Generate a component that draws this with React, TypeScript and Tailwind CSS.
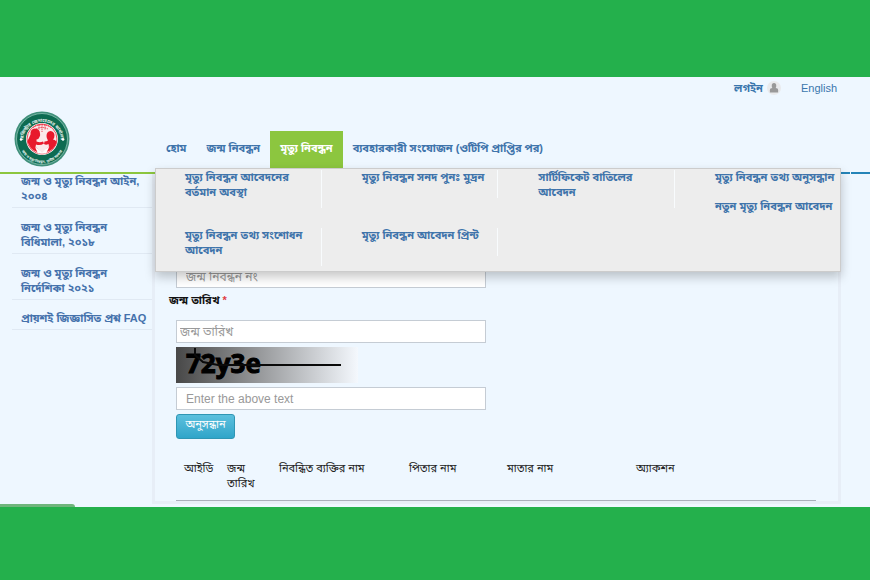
import type { ReactNode } from "react";

const sideLinks = [
  "জন্ম ও মৃত্যু নিবন্ধন আইন, ২০০৪",
  "জন্ম ও মৃত্যু নিবন্ধন বিধিমালা, ২০১৮",
  "জন্ম ও মৃত্যু নিবন্ধন নির্দেশিকা ২০২১",
  "প্রায়শই জিজ্ঞাসিত প্রশ্ন FAQ",
];

// each cell of the mega menu can hold more than one link
const menuCells = [
  ["মৃত্যু নিবন্ধন আবেদনের বর্তমান অবস্থা"],
  ["মৃত্যু নিবন্ধন সনদ পুনঃ মুদ্রন"],
  ["সার্টিফিকেট বাতিলের আবেদন"],
  ["মৃত্যু নিবন্ধন তথ্য অনুসন্ধান", "নতুন মৃত্যু নিবন্ধন আবেদন"],
  ["মৃত্যু নিবন্ধন তথ্য সংশোধন আবেদন"],
  ["মৃত্যু নিবন্ধন আবেদন প্রিন্ট"],
];

function Logo() {
  return (
    <svg viewBox="0 0 112 112" className="h-14 w-14 shrink-0" aria-hidden="true">
      <defs>
        <path id="arcTop" d="M18 60 A38 38 0 1 1 94 60" />
        <path id="arcBottom" d="M10 58 A46 46 0 0 0 102 58" />
      </defs>
      <circle cx="56" cy="56" r="55" fill="#3f8f7a" />
      <circle cx="56" cy="56" r="51" fill="#0d6b51" stroke="#8fc4b5" strokeWidth="1.5" />
      <circle cx="56" cy="56" r="32" fill="#fff" />
      <circle cx="56" cy="56" r="30" fill="#fbe9ea" stroke="#e8192c" strokeWidth="1.5" />
      <path d="M38 33 Q56 22 74 33 M44 36 Q56 30 68 36 M50 28 V38 M56 26 V42 M62 28 V38" fill="none" stroke="#e8192c" strokeWidth="1.5" strokeDasharray="3 1.5" />
      <g fill="#e8192c">
        <path d="M33 47 Q32 36 42 35 Q52 36 52 45 Q53 48 51 52 Q49 57 45 57 L45 61 Q52 64 58 61 L60 65 Q52 70 44 67 L43 72 Q50 77 53 83 Q36 82 29 66 Q26 59 29 56 Z" />
        <path d="M65 50 Q65 41 73 40 Q81 41 81 49 Q81 55 78 57 Q86 59 85 64 Q80 79 62 83 Q63 76 70 71 L69 66 Q64 69 60 66 L61 61 Q65 61 68 59 Q65 55 65 50 Z" />
      </g>
      <path d="M42 72 Q50 76 56 84 Q62 76 71 71 L64 85 H48 Z" fill="#fff" />
      <g fill="#e5f2ee" fontWeight="700" textAnchor="middle">
        <text fontSize="9">
          <textPath href="#arcTop" startOffset="50%">রেজিস্ট্রার জেনারেলের কার্যালয়</textPath>
        </text>
        <text fontSize="7">
          <textPath href="#arcBottom" startOffset="50%">জন্ম ও মৃত্যু নিবন্ধন, স্থানীয় সরকার</textPath>
        </text>
      </g>
      <circle cx="14" cy="57" r="2.5" fill="#fff" />
      <circle cx="98" cy="57" r="2.5" fill="#fff" />
    </svg>
  );
}

function UserIcon() {
  return (
    <span className="flex h-3.5 w-3.5 items-center justify-center rounded-full bg-[#e9eaec]">
      <svg viewBox="0 0 16 16" className="h-3 w-3" fill="#999999" aria-hidden="true">
        <ellipse cx="8" cy="5" rx="3" ry="3.8" />
        <path d="M2.5 14 V11 Q2.5 8 6 8 H10 Q13.500 8 13.500 11 V14 Z" />
      </svg>
    </span>
  );
}

function NavLink({ children, active }: { children: ReactNode; active?: boolean }) {
  return (
    <li>
      <a
        href="#"
        className={
          active
            ? "flex h-[37px] items-center bg-[#8cc63f] px-2.5 pb-0.5 text-white"
            : "flex h-[37px] items-center px-2.5 pb-0.5"
        }
      >
        {children}
      </a>
    </li>
  );
}

function MegaMenu() {
  return (
    <div className="absolute top-full right-[29px] left-[155px] z-10 border border-[#cccccc] bg-[#ededed] pt-px pr-1 pb-[5px] pl-[29px] shadow-[0_5px_10px_rgba(0,0,0,0.22)]">
      <ul className="grid grid-cols-[1fr_1fr_1fr_121px] items-start gap-x-10 gap-y-3.5">
        {menuCells.map((links, i) => (
          <li
            key={i}
            className={
              i === 3
                ? "flex flex-col gap-3.5 whitespace-nowrap"
                : "min-h-7 border-r border-[#f8fbfd] pr-2 pb-2"
            }
          >
            {links.map((text) => (
              <a key={text} href="#" className="block leading-[15px]">
                {text}
              </a>
            ))}
          </li>
        ))}
      </ul>
    </div>
  );
}

function Header() {
  return (
    <header className="relative">
      <div className="flex h-[22px] items-center justify-end gap-5 pr-[33px] text-[11px] text-[#3a76ad]">
        <a href="#" className="flex items-center gap-1 font-bold">
          লগইন <UserIcon />
        </a>
        <a href="#">English</a>
      </div>
      <div className="relative flex h-[69px] items-end text-[11px] font-bold text-[#3f74ab]">
        <a href="#" aria-label="Home" className="mb-px ml-3.5">
          <Logo />
        </a>
        <nav className="ml-[86px]">
          <ul className="flex">
            <NavLink>হোম</NavLink>
            <NavLink>জন্ম নিবন্ধন</NavLink>
            <NavLink active>মৃত্যু নিবন্ধন</NavLink>
            <NavLink>ব্যবহারকারী সংযোজন (ওটিপি প্রাপ্তির পর)</NavLink>
          </ul>
        </nav>
        <MegaMenu />
      </div>
      <div className="flex gap-px pt-1">
        <span className="h-0.5 flex-1 bg-[#8cc63f]" />
        <span className="h-0.5 w-3 bg-[#2484b8]" />
        <span className="h-0.5 w-[19px] bg-[#2484b8]" />
      </div>
    </header>
  );
}

function Sidebar() {
  return (
    <aside className="w-[140px] shrink-0 text-[11px] font-bold text-[#4572ac]">
      <ul>
        {sideLinks.map((text) => (
          <li key={text} className="border-b border-[#e0e9f3] pt-3 pb-[3px] pl-[9px] leading-[15px] first:pt-0 last:pt-[11px]">
            <a href="#">{text}</a>
          </li>
        ))}
      </ul>
    </aside>
  );
}

const inputClass =
  "block h-[23px] w-[310px] border border-[#c5ccd4] bg-white text-xs text-[#333333] placeholder:text-[#999999]";

function SearchPanel() {
  return (
    <main className="min-w-0 flex-1 border-x-3 border-b-3 border-[#e7eef7] pt-[91px] pr-[22px] pl-[21px]">
      <form>
        <input aria-label="জন্ম নিবন্ধন নং" placeholder="জন্ম নিবন্ধন নং" className={`${inputClass} px-[9px]`} />
        <label htmlFor="dob" className="-ml-[7px] block h-8 pt-1 text-[11px] font-bold text-[#111111]">
          জন্ম তারিখ <span className="text-[#e03c46]">*</span>
        </label>
        <input id="dob" placeholder="জন্ম তারিখ" className={`${inputClass} px-[3px]`} />
        <svg viewBox="0 0 182 36" className="mt-1 h-9 w-[182px]" role="img" aria-label="captcha">
          <defs>
            <linearGradient id="captchaBg">
              <stop offset="0" stopColor="#484848" />
              <stop offset="1" stopColor="#f4f8fd" />
            </linearGradient>
          </defs>
          <rect width="182" height="36" fill="url(#captchaBg)" />
          <text x="10" y="26" fontFamily="Open Sans, sans-serif" fontSize="26" fontWeight="700" stroke="#000" strokeWidth="1">
            72y3e
          </text>
          <path d="M19 1 V8 L27 15 L42 18 H165" fill="none" stroke="#0a0a0a" strokeWidth="2" />
        </svg>
        <input
          aria-label="Enter the above text"
          placeholder="Enter the above text"
          className={`${inputClass} mt-1 px-[9px]`}
        />
        <button
          type="button"
          className="mt-1 flex h-[25px] w-[59px] items-center justify-center rounded-[3px] border border-[#2f96b4] bg-linear-to-b from-[#5bc0de] to-[#2fa5c9] pb-1 text-[11px] text-white"
        >
          অনুসন্ধান
        </button>
      </form>
      <table className="mt-[22px] w-full table-fixed border-b border-[#a9afba] text-[11px] text-[#222222]">
        <thead>
          <tr className="h-[39px] text-left align-top leading-[15px]">
            <th className="w-[43px] pl-2 font-normal">আইডি</th>
            <th className="w-[52px] pr-2 pl-2 font-normal">জন্ম তারিখ</th>
            <th className="w-[130px] pl-2 font-normal">নিবন্ধিত ব্যক্তির নাম</th>
            <th className="w-[98px] pl-2 font-normal">পিতার নাম</th>
            <th className="w-[129px] pl-2 font-normal">মাতার নাম</th>
            <th className="pl-2 font-normal">অ্যাকশন</th>
          </tr>
        </thead>
      </table>
    </main>
  );
}

export default function App() {
  return (
    <div className="flex min-h-screen flex-col bg-[#24b04c] pt-[77px] font-['Liberation_Sans','Noto_Sans_Bengali',sans-serif]">
      <div className="bg-[#eef7ff]">
        <Header />
        <div className="flex pr-[29px] pl-3">
          <Sidebar />
          <SearchPanel />
        </div>
        <div className="h-[3px] w-[75px] rounded-tr bg-[#6fb57c]" />
      </div>
    </div>
  );
}
